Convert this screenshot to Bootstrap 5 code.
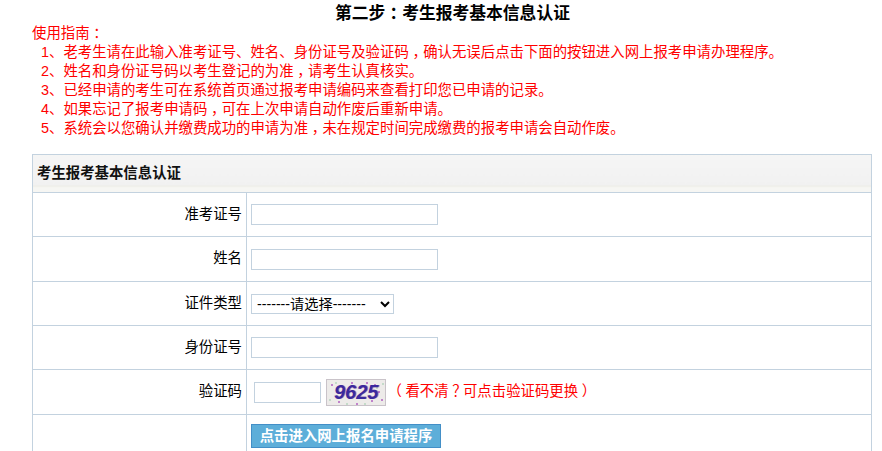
<!DOCTYPE html>
<html lang="zh-CN">
<head>
<meta charset="utf-8">
<title>考生报考基本信息认证</title>
<link href="https://cdn.jsdelivr.net/npm/bootstrap@5.3.0/dist/css/bootstrap.min.css" rel="stylesheet">
<style>
html,body{height:451px;overflow:hidden}
body{font-family:"Liberation Sans","Noto Sans CJK SC",sans-serif;font-size:14.4px;color:#000;background:#fff}
.page-wrap{margin:0 10px 0 32px;width:840px}
.step-title{font-size:16.8px;font-weight:700;line-height:24px;height:22px;margin:2px 0 0;padding-left:303px;color:#000}
.guide{color:#f00;line-height:19px;height:130px;margin:0;padding:0;font-size:14.4px}
.guide div{padding-left:9px;height:19px;white-space:nowrap}
.guide div.guide-head{padding-left:0}
.mid{font-feature-settings:"halt";padding:0 .25em}
.info-table{width:840px;border-collapse:collapse;table-layout:fixed;margin:0}
.info-table td,.info-table th{border:1px solid #c3d2df;padding:0;vertical-align:middle}
.info-table th{height:38px;padding-left:4px;font-size:14.4px;font-weight:700;background:linear-gradient(#f5f5f5,#f1f1f1 81%,#e9e9e3 81%,#f0f0ea 84%,#f6f6f3 86%,#f6f6f3);text-align:left;color:#111}
.info-table .lbl{text-align:right;padding-right:4px}
.info-table .val{padding-left:4px}
.info-table tr.r1 td{height:44px}
.info-table tr.r2 td{height:45px}
.col-a{width:214px}
.field{display:block;width:187px;height:21px;border:1px solid #c3d2df;background:#fff;padding:0 4px;outline:0;border-radius:0}
.pick{width:143px;height:20px;border:1px solid #c3d2df;background:#fff;padding:0 0 0 1px;font-size:14.2px;font-family:inherit;color:#000;display:block;border-radius:0}
.code-input{width:67px;height:21px;margin-left:3px;border:1px solid #c3d2df;display:block;border-radius:0;outline:0}
.captcha{position:relative;width:60px;height:27px;margin-left:5px;background:#edebe9;border:1px solid #c9c3c9;flex:none;overflow:hidden}
.captcha svg{position:absolute;left:0;top:0}
.captcha span{position:absolute;left:7px;top:0;font:italic 700 20px/25px "Liberation Sans",sans-serif;color:#3a2a9e;text-shadow:1px 0 0 rgba(150,40,120,.55)}
.hint{color:#f00;white-space:nowrap;margin-left:5px}
.go-btn{display:block;width:190px;height:24px;padding:0;background:#5daed9;border:1px solid #438fc7;color:#fff;font-weight:700;font-size:14.4px;line-height:22px;border-radius:0;text-align:center;margin-top:-1px}
</style>
</head>
<body>
<div class="page-wrap">
  <h1 class="step-title">第二步<span class="mid">：</span>考生报考基本信息认证</h1>
  <div class="guide">
    <div class="guide-head">使用指南<span class="mid">：</span></div>
    <div>1、老考生请在此输入准考证号、姓名、身份证号及验证码<span class="mid">，</span>确认无误后点击下面的按钮进入网上报考申请办理程序。</div>
    <div>2、姓名和身份证号码以考生登记的为准<span class="mid">，</span>请考生认真核实。</div>
    <div>3、已经申请的考生可在系统首页通过报考申请编码来查看打印您已申请的记录。</div>
    <div>4、如果忘记了报考申请码<span class="mid">，</span>可在上次申请自动作废后重新申请。</div>
    <div>5、系统会以您确认并缴费成功的申请为准<span class="mid">，</span>未在规定时间完成缴费的报考申请会自动作废。</div>
  </div>
  <table class="info-table">
    <colgroup><col class="col-a"><col></colgroup>
    <tr><th colspan="2">考生报考基本信息认证</th></tr>
    <tr class="r1"><td class="lbl">准考证号</td><td class="val"><input class="field" type="text"></td></tr>
    <tr class="r2"><td class="lbl">姓名</td><td class="val"><input class="field" type="text"></td></tr>
    <tr class="r1"><td class="lbl">证件类型</td><td class="val"><select class="pick"><option>-------请选择-------</option></select></td></tr>
    <tr class="r1"><td class="lbl">身份证号</td><td class="val"><input class="field" type="text"></td></tr>
    <tr class="r2"><td class="lbl">验证码</td><td class="val">
      <div class="d-flex align-items-center">
        <input class="code-input" type="text">
        <div class="captcha">
          <svg width="60" height="27" viewBox="0 0 60 27">
            <g fill="#b05fc0">
              <circle cx="5" cy="5" r="1"/><circle cx="12" cy="22" r="1"/><circle cx="48" cy="5" r="1"/><circle cx="52" cy="12" r="1"/><circle cx="45" cy="21" r="1"/><circle cx="30" cy="24" r="1"/><circle cx="55" cy="20" r="1"/><circle cx="25" cy="3" r="1"/><circle cx="40" cy="3" r="1"/>
            </g>
            <g fill="#8fc7a0">
              <circle cx="9" cy="3" r=".8"/><circle cx="20" cy="24" r=".8"/><circle cx="50" cy="8" r=".8"/><circle cx="38" cy="24" r=".8"/><circle cx="3" cy="20" r=".8"/><circle cx="56" cy="4" r=".8"/>
            </g>
          </svg>
          <span>9625</span>
        </div>
        <div class="hint"><span class="mid">（</span>看不清<span class="mid">？</span>可点击验证码更换<span class="mid">）</span></div>
      </div>
    </td></tr>
    <tr class="r1"><td class="lbl"></td><td class="val"><button class="go-btn" type="button">点击进入网上报名申请程序</button></td></tr>
  </table>
</div>
<script src="https://cdn.jsdelivr.net/npm/bootstrap@5.3.0/dist/js/bootstrap.bundle.min.js"></script>
</body>
</html>
